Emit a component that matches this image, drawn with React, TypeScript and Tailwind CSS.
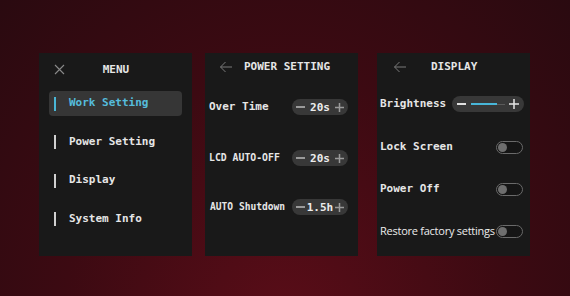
import React from "react";

const mono = { fontFamily: '"DejaVu Sans Mono", "Liberation Mono", monospace' };

function XIcon() {
  return (
    <svg width="11" height="11" viewBox="0 0 11 11" className="shrink-0">
      <path d="M1 1 L10 10 M10 1 L1 10" stroke="#8a8a8a" strokeWidth="1.1" fill="none" />
    </svg>
  );
}

function BackArrow() {
  return (
    <svg width="14" height="12" viewBox="0 0 14 12" className="shrink-0">
      <path d="M13 6 H1.5 M6.5 1 L1.5 6 L6.5 11" stroke="#7a7a7a" strokeWidth="1" fill="none" />
    </svg>
  );
}

function Stepper({ value }: { value: string }) {
  return (
    <div className="flex h-[16px] w-[56px] shrink-0 items-center justify-between rounded-full bg-[#383838] px-[4px]">
      <span className="h-[1.5px] w-[9px] bg-[#9a9a9a]" />
      <span className="whitespace-nowrap text-[11px] font-bold leading-none text-[#ececec]" style={mono}>{value}</span>
      <svg width="9" height="9" viewBox="0 0 9 9"><path d="M0 4.5 H9 M4.5 0 V9" stroke="#9a9a9a" strokeWidth="1.5" /></svg>
    </div>
  );
}

function Toggle() {
  return (
    <div className="flex h-[13px] w-[27px] shrink-0 items-center rounded-full border-[1.5px] border-[#6a6a6a] bg-[#151515] pl-[1px]">
      <span className="h-[9px] w-[9px] rounded-full bg-[#6e6e6e]" />
    </div>
  );
}

export default function App() {
  return (
    <div className="flex h-[296px] w-[570px] items-start bg-[radial-gradient(ellipse_at_50%_110%,#5a0d18_0%,#3c0a12_55%,#2a0a10_100%)] pl-[39px] pt-[53px]">
      {/* MENU panel */}
      <div className="flex h-[203px] w-[153px] flex-col bg-[#191919] px-[10px]" style={mono}>
        <div className="relative mt-[11px] flex h-[12px] items-center justify-center">
          <div className="absolute left-[5px] top-[0px]"><XIcon /></div>
          <span className="pl-[1px] text-[11px] font-bold text-[#e6e6e6]">MENU</span>
        </div>
        <div className="mt-[15px] flex h-[25px] items-center rounded-[4px] bg-[#363636] pl-[5px]">
          <span className="h-[14px] w-[2px] bg-[#4ab6d6]" />
          <span className="ml-[13px] whitespace-nowrap text-[11px] font-bold text-[#55bcdc]">Work Setting</span>
        </div>
        {["Power Setting", "Display", "System Info"].map((t) => (
          <div key={t} className="mt-[13.5px] flex h-[25px] items-center pl-[5px]">
            <span className="h-[14px] w-[2px] bg-[#d0d0d0]" />
            <span className="ml-[13px] whitespace-nowrap text-[11px] font-bold text-[#e6e6e6]">{t}</span>
          </div>
        ))}
      </div>

      {/* POWER SETTING panel */}
      <div className="ml-[13px] flex h-[203px] w-[153px] flex-col bg-[#191919] pl-[4px] pr-[10px]" style={mono}>
        <div className="mt-[8px] flex h-[12px] items-center">
          <div className="ml-[10px]"><BackArrow /></div>
          <span className="ml-[11px] whitespace-nowrap text-[11px] font-bold text-[#e6e6e6]">POWER SETTING</span>
        </div>
        <div className="mt-[26px] flex h-[16px] items-center justify-between">
          <span className="whitespace-nowrap text-[11px] font-bold text-[#e6e6e6]">Over Time</span>
          <Stepper value="20s" />
        </div>
        <div className="mt-[35px] flex h-[16px] items-center justify-between">
          <span className="whitespace-nowrap text-[9.8px] font-bold text-[#e6e6e6]">LCD AUTO-OFF</span>
          <Stepper value="20s" />
        </div>
        <div className="mt-[33px] flex h-[16px] items-center justify-between">
          <span className="ml-[1px] whitespace-nowrap text-[9.6px] font-bold text-[#e6e6e6]">AUTO Shutdown</span>
          <Stepper value="1.5h" />
        </div>
      </div>

      {/* DISPLAY panel */}
      <div className="ml-[19px] flex h-[203px] w-[153px] flex-col bg-[#191919] pl-[3px] pr-[6px]" style={mono}>
        <div className="mt-[8px] flex h-[12px] items-center">
          <div className="ml-[13px]"><BackArrow /></div>
          <span className="ml-[24px] whitespace-nowrap text-[11px] font-bold text-[#e6e6e6]">DISPLAY</span>
        </div>
        <div className="mt-[23px] flex h-[16px] items-center justify-between">
          <span className="whitespace-nowrap text-[11px] font-bold text-[#e6e6e6]">Brightness</span>
          <div className="flex h-[16px] w-[72px] items-center rounded-full bg-[#383838] px-[5px]">
            <span className="h-[1.5px] w-[9px] bg-[#e0e0e0]" />
            <span className="ml-[5px] h-[2px] w-[26px] bg-[#48b6d8]" />
            <span className="h-[1px] w-[8px] bg-[#5a5a5a]" />
            <svg className="ml-auto" width="10" height="10" viewBox="0 0 10 10"><path d="M0 5 H10 M5 0 V10" stroke="#e6e6e6" strokeWidth="1.5" /></svg>
          </div>
        </div>
        {["Lock Screen", "Power Off"].map((t) => (
          <div key={t} className="mt-[28px] flex h-[14px] items-center justify-between pr-[1px]">
            <span className="whitespace-nowrap text-[11px] font-bold text-[#e6e6e6]">{t}</span>
            <Toggle />
          </div>
        ))}
        <div className="mt-[28px] flex h-[14px] items-center justify-between pr-[1px]">
          <span className="whitespace-nowrap text-[11px] font-medium tracking-[-0.25px] text-[#ececec]" style={{ fontFamily: '"Open Sans", "Noto Sans", sans-serif' }}>Restore factory settings</span>
          <Toggle />
        </div>
      </div>
    </div>
  );
}
